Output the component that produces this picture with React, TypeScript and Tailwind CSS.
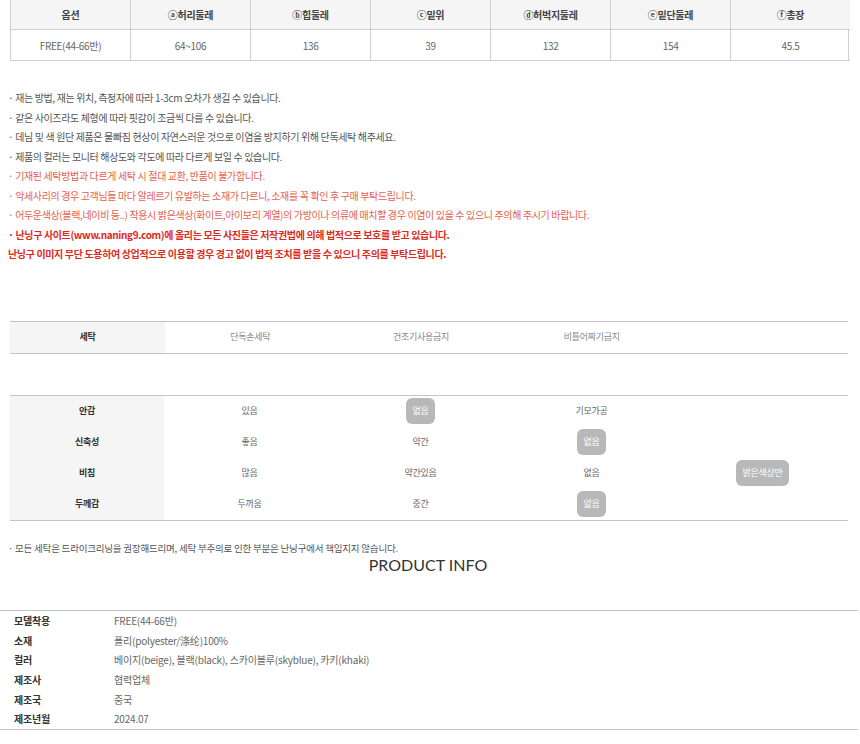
import React from 'react';

const sizeHead = ['옵션', 'ⓐ허리둘레', 'ⓑ힙둘레', 'ⓒ밑위', 'ⓓ허벅지둘레', 'ⓔ밑단둘레', 'ⓕ총장'];
const sizeRow = ['FREE(44-66반)', '64~106', '136', '39', '132', '154', '45.5'];

const notes: { text: string; tone: 'gray' | 'red' | 'bold' }[] = [
  { text: '· 재는 방법, 재는 위치, 측정자에 따라 1-3cm 오차가 생길 수 있습니다.', tone: 'gray' },
  { text: '· 같은 사이즈라도 체형에 따라 핏감이 조금씩 다를 수 있습니다.', tone: 'gray' },
  { text: '· 데님 및 색 원단 제품은 물빠짐 현상이 자연스러운 것으로 이염을 방지하기 위해 단독세탁 해주세요.', tone: 'gray' },
  { text: '· 제품의 컬러는 모니터 해상도와 각도에 따라 다르게 보일 수 있습니다.', tone: 'gray' },
  { text: '· 기재된 세탁방법과 다르게 세탁 시 절대 교환, 반품이 불가합니다.', tone: 'red' },
  { text: '· 악세사리의 경우 고객님들 마다 알레르기 유발하는 소재가 다르니, 소재를 꼭 확인 후 구매 부탁드립니다.', tone: 'red' },
  { text: '· 어두운색상(블랙,네이비 등..) 착용시 밝은색상(화이트,아이보리 계열)의 가방이나 의류에 매치할 경우 이염이 있을 수 있으니 주의해 주시기 바랍니다.', tone: 'red' },
  { text: '· 난닝구 사이트(www.naning9.com)에 올리는 모든 사진들은 저작권법에 의해 법적으로 보호를 받고 있습니다.', tone: 'bold' },
  { text: '난닝구 이미지 무단 도용하여 상업적으로 이용할 경우 경고 없이 법적 조치를 받을 수 있으니 주의를 부탁드립니다.', tone: 'bold' },
];

const wash = ['단독손세탁', '건조기사용금지', '비틀어짜기금지', ''];

// selected index per row gets the grey chip
const feel: { label: string; opts: string[]; sel: number }[] = [
  { label: '안감', opts: ['있음', '없음', '기모가공', ''], sel: 1 },
  { label: '신축성', opts: ['좋음', '약간', '없음', ''], sel: 2 },
  { label: '비침', opts: ['많음', '약간있음', '없음', '밝은색상만'], sel: 3 },
  { label: '두께감', opts: ['두꺼움', '중간', '얇음', ''], sel: 2 },
];

const info = [
  ['모델착용', 'FREE(44-66반)'],
  ['소재', '폴리(polyester/涤纶)100%'],
  ['컬러', '베이지(beige), 블랙(black), 스카이블루(skyblue), 카키(khaki)'],
  ['제조사', '협력업체'],
  ['제조국', '중국'],
  ['제조년월', '2024.07'],
];

export default function App() {
  return (
    <div className="w-[860px] h-[744px] overflow-hidden bg-white font-['Noto_Sans_CJK_KR',sans-serif] text-[#555]">
      {/* size table */}
      <div className="ml-[10px] w-[839px] grid grid-cols-[119px_repeat(6,120px)] border-l border-r border-[#cfcfcf] text-[10px] tracking-[-0.3px]">
        {sizeHead.map((h, i) => (
          <div
            key={h}
            className={`h-[30px] flex items-center justify-center bg-[#f5f5f5] font-bold text-[#444] border-b border-[#cfcfcf] ${i > 0 ? 'border-l' : ''}`}
          >
            {h}
          </div>
        ))}
        {sizeRow.map((v, i) => (
          <div
            key={i}
            className={`h-[31px] flex items-center justify-center text-[#666] border-b border-[#cfcfcf] ${i > 0 ? 'border-l' : ''}`}
          >
            {v}
          </div>
        ))}
      </div>

      {/* notes */}
      <div className="mt-[27px] pl-[8px] text-[10px] leading-[19.5px] tracking-[-0.36px]">
        {notes.map((n, i) => (
          <div
            key={i}
            className={
              n.tone === 'gray'
                ? 'text-[#555]'
                : n.tone === 'red'
                ? 'text-[#e4604f]'
                : 'text-[#dd2a1c] font-bold'
            }
          >
            {n.text}
          </div>
        ))}
      </div>

      {/* wash table */}
      <div className="mt-[57px] ml-[10px] w-[838px] flex h-[33px] border-t border-b border-[#c4c4c4] text-[9px] tracking-[-0.3px]">
        <div className="w-[155px] flex items-center justify-center bg-[#f5f5f5] font-bold text-[#333]">세탁</div>
        {wash.map((w, i) => (
          <div key={i} className="w-[171px] flex items-center justify-center text-[#888]">
            {w}
          </div>
        ))}
      </div>

      {/* fabric feel table */}
      <div className="mt-[41px] ml-[10px] w-[838px] flex border-t border-b border-[#c4c4c4] text-[9px] tracking-[-0.3px]">
        <div className="w-[155px] bg-[#f5f5f5] flex flex-col">
          {feel.map((r) => (
            <div key={r.label} className="h-[31px] flex items-center justify-center font-bold text-[#333]">
              {r.label}
            </div>
          ))}
        </div>
        <div className="flex-1 flex flex-col">
          {feel.map((r) => (
            <div key={r.label} className="h-[31px] flex">
              {r.opts.map((o, i) => (
                <div key={i} className="w-[171px] flex items-center justify-center text-[#666]">
                  {o && i === r.sel ? (
                    <span className="h-[26px] px-[7px] flex items-center rounded-[6px] bg-[#b8b8b8] text-white">{o}</span>
                  ) : (
                    o
                  )}
                </div>
              ))}
            </div>
          ))}
        </div>
      </div>

      <div className="mt-[20px] pl-[8px] text-[9.5px] leading-[14px] tracking-[-0.2px] text-[#555]">
        · 모든 세탁은 드라이크리닝을 권장해드리며, 세탁 부주의로 인한 부분은 난닝구에서 책임지지 않습니다.
      </div>
      <div className="pr-[4px] text-center font-['Lato',sans-serif] text-[16px] leading-[20px] text-[#333]">PRODUCT INFO</div>

      {/* product info */}
      <div className="mt-[35px] w-[858px] border-t border-b border-[#c4c4c4] text-[10px] tracking-[-0.2px]">
        {info.map(([k, v]) => (
          <div key={k} className="h-[19.7px] flex items-center">
            <div className="w-[114px] pl-[14px] font-bold text-[#333]">{k}</div>
            <div className="text-[#666]">{v}</div>
          </div>
        ))}
      </div>
    </div>
  );
}
